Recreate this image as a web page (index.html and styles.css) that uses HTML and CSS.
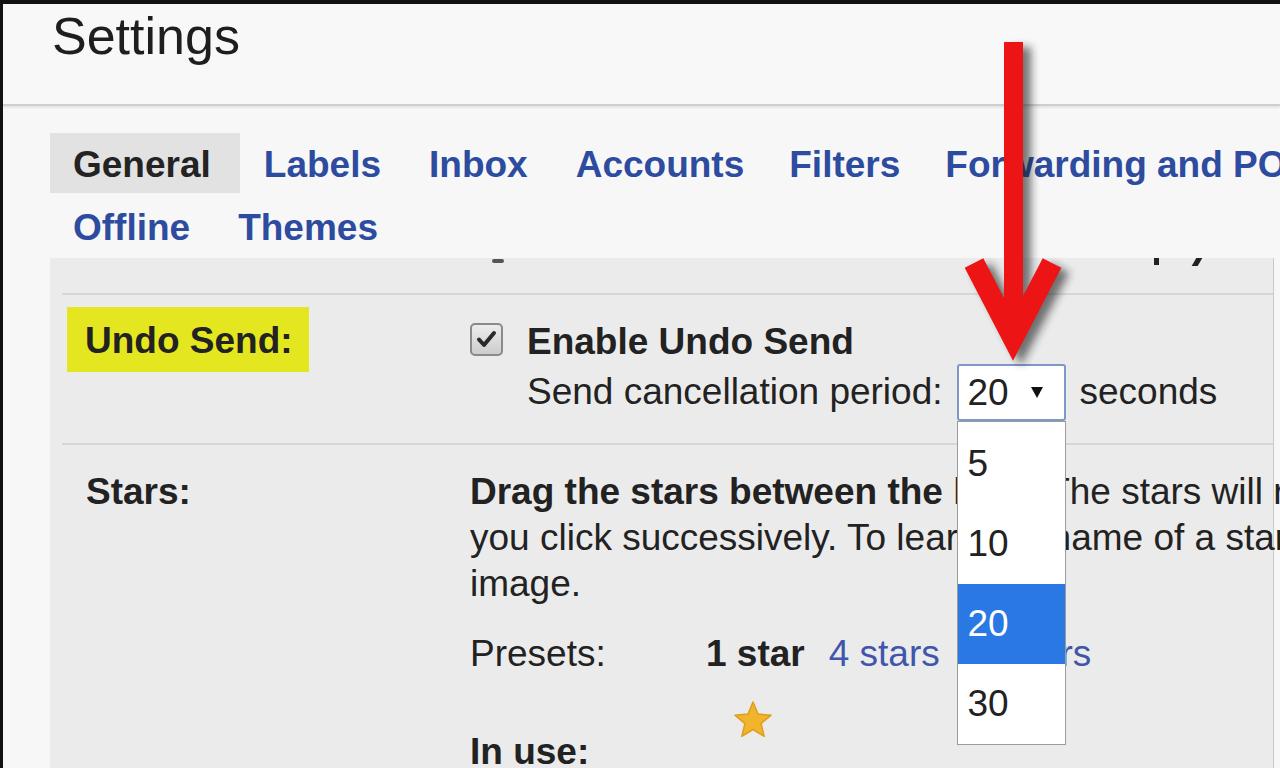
FILE: index.html
```html
<!DOCTYPE html>
<html lang="en">
<head>
<meta charset="utf-8">
<title>Settings</title>
<link rel="stylesheet" href="styles.css">
</head>
<body>
<div class="frame">
  <header class="header"><h1>Settings</h1></header>
  <nav class="tabs">
    <div class="tab-row">
      <span class="tab active">General</span>
      <span class="tab">Labels</span>
      <span class="tab">Inbox</span>
      <span class="tab">Accounts</span>
      <span class="tab tight">Filters</span>
      <span class="tab tight">Forwarding and POP/IMAP</span>
    </div>
    <div class="tab-row">
      <span class="tab first">Offline</span>
      <span class="tab">Themes</span>
    </div>
  </nav>
  <section class="panel">
    <div class="stub"><span class="dash"></span><span class="tick1"></span><span class="tick2"></span></div>
    <div class="row undo">
      <div class="label"><span class="hl">Undo Send:</span></div>
      <div class="content">
        <div class="line">
          <span class="checkbox"><svg width="29" height="29" viewBox="0 0 29 29"><path d="M7 14.5 L12 20 L22 8" fill="none" stroke="#2a2a2a" stroke-width="4" stroke-linecap="round" stroke-linejoin="round"/></svg></span>
          <span class="strong">Enable Undo Send</span>
        </div>
        <div class="line indent">
          <span>Send cancellation period:</span>
          <span class="select">
            <span>20</span><span class="caret"></span>
            <span class="dropdown">
              <span class="opt">5</span>
              <span class="opt">10</span>
              <span class="opt sel">20</span>
              <span class="opt">30</span>
            </span>
          </span>
          <span>seconds</span>
        </div>
      </div>
    </div>
    <div class="row stars">
      <div class="label">Stars:</div>
      <div class="content">
        <div class="para">
          <div class="pline"><b>Drag the stars between the lists.</b> The stars will rotate in the order shown below when</div>
          <div class="pline">you click successively. To learn the name of a star for search, hover your mouse over the</div>
          <div class="pline">image.</div>
        </div>
        <div class="presets">
          <span class="plabel">Presets:</span>
          <span class="one">1 star</span>
          <span class="link gap">4 stars</span>
          <span class="link">all stars</span>
        </div>
        <div class="starline">
          <svg class="star" width="40" height="40" viewBox="0 0 40 40"><polygon points="20,2 25,14.1 38.07,15.13 28.1,23.6 31.17,36.37 20,29.5 8.83,36.37 11.9,23.6 1.93,15.13 15,14.1" fill="#f1b42c" stroke="#dd9e1c" stroke-width="1.5" stroke-linejoin="round"/></svg>
        </div>
        <div class="inuse">In use:</div>
      </div>
    </div>
  </section>
</div>
<svg class="arrow" width="1280" height="768" viewBox="0 0 1280 768">
  <defs>
    <filter id="sh" x="-50%" y="-20%" width="200%" height="140%"><feGaussianBlur stdDeviation="4"/></filter>
  </defs>
  <g transform="translate(8,5)" filter="url(#sh)" opacity="0.6">
    <rect x="1004" y="42" width="19" height="300" fill="#1a1a1a"/>
    <polyline points="974,263 1013,338 1052,263" fill="none" stroke="#1a1a1a" stroke-width="21" stroke-miterlimit="10"/>
  </g>
  <g>
    <rect x="1004" y="42" width="19" height="300" fill="#ec1414"/>
    <polyline points="974,263 1013,338 1052,263" fill="none" stroke="#ec1414" stroke-width="21" stroke-miterlimit="10"/>
  </g>
</svg>
</body>
</html>
```
FILE: styles.css
```css
html, body {
  margin: 0;
  padding: 0;
}
body {
  width: 1280px;
  height: 768px;
  overflow: hidden;
  position: relative;
  background: #121212;
  font-family: "Liberation Sans", Arial, sans-serif;
  color: #222;
}
.frame {
  margin: 4px 0 0 3px;
  height: 764px;
  background: #f7f7f7;
  overflow: hidden;
}
.header {
  box-sizing: border-box;
  height: 102px;
  padding: 3px 0 0 49px;
  background: #f8f8f8;
  border-bottom: 2px solid #cfcfcf;
  box-shadow: 0 1px 3px rgba(0,0,0,0.12);
}
.header h1 {
  margin: 0;
  font-size: 52px;
  font-weight: normal;
  line-height: 58px;
  color: #1e1e1e;
}
.tabs {
  padding: 27px 0 0 47px;
}
.tab-row {
  display: flex;
  height: 60px;
  white-space: nowrap;
}
.tab-row + .tab-row {
  margin-top: 3px;
}
.tab {
  flex-shrink: 0;
  font-size: 37px;
  font-weight: bold;
  line-height: 56px;
  padding: 4px 24px 0;
  color: #2d4c9f;
}
.tab.active {
  background: #e2e2e2;
  color: #232323;
  padding-left: 23px;
  padding-right: 29px;
}
.tab.first {
  padding-left: 23px;
}
.tab.tight {
  padding-left: 21px;
}
.panel {
  margin: 2px 6px 0 47px;
  height: 520px;
  background: #ebebeb;
  border-right: 1px solid #cacaca;
  padding-left: 12px;
}
.stub {
  height: 35px;
  display: flex;
  align-items: flex-start;
}
.dash {
  width: 12px;
  height: 4px;
  margin: 1px 0 0 430px;
  border-radius: 2px;
  background: #555;
}
.tick1 {
  width: 5px;
  height: 7px;
  margin-left: 650px;
  background: #222;
}
.tick2 {
  width: 6px;
  height: 8px;
  margin-left: 35px;
  background: #222;
  transform: skewX(-30deg);
}
.row {
  display: flex;
  border-top: 2px solid #d6d6d6;
}
.label {
  flex-shrink: 0;
  width: 384px;
  padding-left: 24px;
  font-size: 37px;
  font-weight: bold;
  line-height: 46px;
}
.content {
  flex: 1;
  font-size: 37px;
  white-space: nowrap;
}
.undo {
  padding: 12px 0 26px;
}
.hl {
  display: inline-block;
  margin-left: -19px;
  padding: 3px 16px 0 18px;
  line-height: 62px;
  background: #e4e71f;
}
.undo .content {
  padding-top: 10px;
}
.line {
  display: flex;
  align-items: center;
  height: 50px;
  line-height: 50px;
}
.line.indent {
  padding-left: 57px;
}
.checkbox {
  display: inline-block;
  width: 29px;
  height: 29px;
  border: 2px solid #8a8a8a;
  border-radius: 5px;
  background: linear-gradient(#ececec, #cdcdcd);
  margin: -5px 24px 0 0;
}
.checkbox svg {
  display: block;
}
.strong {
  font-weight: bold;
}
.select {
  position: relative;
  box-sizing: border-box;
  display: flex;
  align-items: center;
  width: 109px;
  height: 57px;
  margin: 0 14px;
  padding-left: 9px;
  border: 2px solid #7e98c9;
  border-radius: 3px;
  background: #fff;
  line-height: 53px;
}
.caret {
  width: 0;
  height: 0;
  margin-left: 22px;
  border-left: 6px solid transparent;
  border-right: 6px solid transparent;
  border-top: 11px solid #111;
}
.dropdown {
  position: absolute;
  top: calc(100% + 2px);
  left: -2px;
  z-index: 5;
  box-sizing: border-box;
  width: 109px;
  padding-top: 2px;
  border: 1px solid #9c9c9c;
  background: #fff;
}
.opt {
  display: block;
  height: 80px;
  line-height: 80px;
  padding-left: 10px;
  color: #222;
}
.opt.sel {
  background: #2a78e4;
  color: #fff;
}
.stars {
  padding-top: 24px;
}
.para {
  line-height: 46px;
}
.presets {
  display: flex;
  margin-top: 24px;
  line-height: 46px;
}
.plabel {
  width: 236px;
}
.one {
  font-weight: bold;
  margin-right: 24px;
}
.link {
  color: #3f56ad;
}
.link.gap {
  margin-right: 24px;
}
.starline {
  box-sizing: border-box;
  height: 52px;
  padding: 23px 0 0 263px;
}
.star {
  display: block;
}
.inuse {
  font-weight: bold;
  line-height: 46px;
}
.arrow {
  position: absolute;
  top: 0;
  left: 0;
  z-index: 10;
  pointer-events: none;
}
```
